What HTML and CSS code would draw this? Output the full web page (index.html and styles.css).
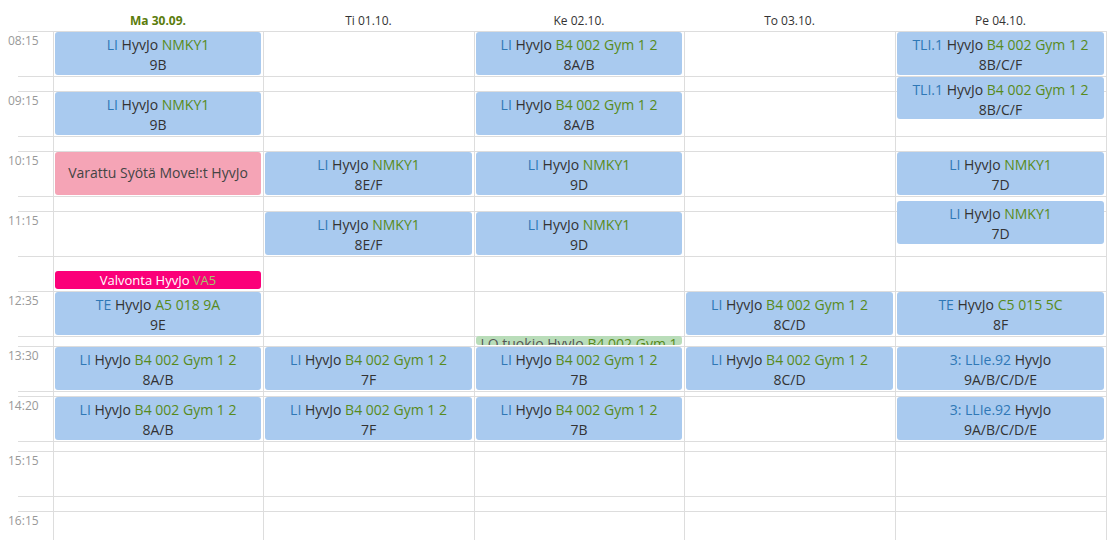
FILE: index.html
```html
<!DOCTYPE html>
<html lang="fi">
<head>
<meta charset="utf-8">
<title>Lukujärjestys</title>
<link rel="stylesheet" href="styles.css">
</head>
<body>
<div class="cal">
  <div class="head">
    <div class="head-day today">Ma 30.09.</div>
    <div class="head-day">Ti 01.10.</div>
    <div class="head-day">Ke 02.10.</div>
    <div class="head-day">To 03.10.</div>
    <div class="head-day">Pe 04.10.</div>
  </div>
  <div class="body">
    <div class="slots">
      <div class="slot lesson"><span class="time">08:15</span></div>
      <div class="slot b15"></div>
      <div class="slot lesson"><span class="time">09:15</span></div>
      <div class="slot b15"></div>
      <div class="slot lesson"><span class="time">10:15</span></div>
      <div class="slot b15"></div>
      <div class="slot lesson"><span class="time">11:15</span></div>
      <div class="slot b35"></div>
      <div class="slot lesson"><span class="time">12:35</span></div>
      <div class="slot b10"></div>
      <div class="slot lesson"><span class="time">13:30</span></div>
      <div class="slot b5"></div>
      <div class="slot lesson"><span class="time">14:20</span></div>
      <div class="slot b10"></div>
      <div class="slot lesson"><span class="time">15:15</span></div>
      <div class="slot b15"></div>
      <div class="slot lesson"><span class="time">16:15</span></div>
    </div>
    <div class="days">
      <div class="day">
        <div class="ev" style="top:1px;height:43px"><div><span class="c">LI</span> HyvJo <span class="r">NMKY1</span></div><div>9B</div></div>
        <div class="ev" style="top:61px;height:43px"><div><span class="c">LI</span> HyvJo <span class="r">NMKY1</span></div><div>9B</div></div>
        <div class="ev pink" style="top:121px;height:43px"><div>Varattu Syötä Move!:t HyvJo</div></div>
        <div class="ev duty" style="top:240px;height:18px">Valvonta HyvJo <span class="dr">VA5</span></div>
        <div class="ev" style="top:261px;height:43px"><div><span class="c">TE</span> HyvJo <span class="r">A5 018 9A</span></div><div>9E</div></div>
        <div class="ev" style="top:316px;height:43px"><div><span class="c">LI</span> HyvJo <span class="r">B4 002 Gym 1 2</span></div><div>8A/B</div></div>
        <div class="ev" style="top:366px;height:43px"><div><span class="c">LI</span> HyvJo <span class="r">B4 002 Gym 1 2</span></div><div>8A/B</div></div>
      </div>
      <div class="day">
        <div class="ev" style="top:121px;height:43px"><div><span class="c">LI</span> HyvJo <span class="r">NMKY1</span></div><div>8E/F</div></div>
        <div class="ev" style="top:181px;height:43px"><div><span class="c">LI</span> HyvJo <span class="r">NMKY1</span></div><div>8E/F</div></div>
        <div class="ev" style="top:316px;height:43px"><div><span class="c">LI</span> HyvJo <span class="r">B4 002 Gym 1 2</span></div><div>7F</div></div>
        <div class="ev" style="top:366px;height:43px"><div><span class="c">LI</span> HyvJo <span class="r">B4 002 Gym 1 2</span></div><div>7F</div></div>
      </div>
      <div class="day">
        <div class="ev" style="top:1px;height:43px"><div><span class="c">LI</span> HyvJo <span class="r">B4 002 Gym 1 2</span></div><div>8A/B</div></div>
        <div class="ev" style="top:61px;height:43px"><div><span class="c">LI</span> HyvJo <span class="r">B4 002 Gym 1 2</span></div><div>8A/B</div></div>
        <div class="ev" style="top:121px;height:43px"><div><span class="c">LI</span> HyvJo <span class="r">NMKY1</span></div><div>9D</div></div>
        <div class="ev" style="top:181px;height:43px"><div><span class="c">LI</span> HyvJo <span class="r">NMKY1</span></div><div>9D</div></div>
        <div class="ev green" style="top:305px;height:9px">LO tuokio HyvJo <span class="r">B4 002 Gym 1 2</span></div>
        <div class="ev" style="top:316px;height:43px"><div><span class="c">LI</span> HyvJo <span class="r">B4 002 Gym 1 2</span></div><div>7B</div></div>
        <div class="ev" style="top:366px;height:43px"><div><span class="c">LI</span> HyvJo <span class="r">B4 002 Gym 1 2</span></div><div>7B</div></div>
      </div>
      <div class="day">
        <div class="ev" style="top:261px;height:43px"><div><span class="c">LI</span> HyvJo <span class="r">B4 002 Gym 1 2</span></div><div>8C/D</div></div>
        <div class="ev" style="top:316px;height:43px"><div><span class="c">LI</span> HyvJo <span class="r">B4 002 Gym 1 2</span></div><div>8C/D</div></div>
      </div>
      <div class="day">
        <div class="ev" style="top:1px;height:43px"><div><span class="c">TLI.1</span> HyvJo <span class="r">B4 002 Gym 1 2</span></div><div>8B/C/F</div></div>
        <div class="ev" style="top:46px;height:42px"><div><span class="c">TLI.1</span> HyvJo <span class="r">B4 002 Gym 1 2</span></div><div>8B/C/F</div></div>
        <div class="ev" style="top:121px;height:43px"><div><span class="c">LI</span> HyvJo <span class="r">NMKY1</span></div><div>7D</div></div>
        <div class="ev" style="top:170px;height:43px"><div><span class="c">LI</span> HyvJo <span class="r">NMKY1</span></div><div>7D</div></div>
        <div class="ev" style="top:261px;height:43px"><div><span class="c">TE</span> HyvJo <span class="r">C5 015 5C</span></div><div>8F</div></div>
        <div class="ev" style="top:316px;height:43px"><div><span class="c">3: LLIe.92</span> HyvJo</div><div>9A/B/C/D/E</div></div>
        <div class="ev" style="top:366px;height:43px"><div><span class="c">3: LLIe.92</span> HyvJo</div><div>9A/B/C/D/E</div></div>
      </div>
    </div>
  </div>
</div>
</body>
</html>
```

FILE: styles.css
```css
html, body {
  margin: 0;
  padding: 0;
  background: #fff;
  overflow: hidden;
}
body {
  font-family: "Open Sans", "DejaVu Sans", sans-serif;
  color: #333;
  width: 1118px;
  height: 540px;
}
.cal {
  width: 1107px;
}
.head {
  height: 31px;
  padding-left: 53px;
  display: grid;
  grid-template-columns: 210px 211px 210px 211px 211px;
  width: 1054px;
}
.head-day {
  display: flex;
  align-items: flex-end;
  justify-content: center;
  font-size: 12px;
  line-height: 16px;
  padding-bottom: 2px;
  color: #333;
}
.head-day.today {
  font-weight: 700;
  color: #5b7c0c;
}
.body {
  position: relative;
}
.slots {
  display: flex;
  flex-direction: column;
}
.slot {
  box-sizing: border-box;
  margin-left: 18px;
  border-top: 1px solid #ddd;
}
.slot.lesson { height: 45px; }
.slot.b15 { height: 15px; }
.slot.b35 { height: 35px; }
.slot.b10 { height: 10px; }
.slot.b5 { height: 5px; }
.time {
  display: block;
  margin-left: -10px;
  padding-top: 1px;
  font-size: 12px;
  line-height: 16px;
  color: #999;
}
.days {
  position: absolute;
  top: 0;
  bottom: 0;
  left: 53px;
  width: 1054px;
  box-sizing: border-box;
  border-right: 1px solid #ddd;
  display: grid;
  grid-template-columns: 210px 211px 210px 211px 211px;
}
.day {
  position: relative;
  border-left: 1px solid #ddd;
}
.ev {
  position: absolute;
  left: 1px;
  right: 2px;
  box-sizing: border-box;
  border-radius: 3px;
  background: #a9caef;
  font-size: 14px;
  line-height: 20px;
  text-align: center;
  color: #333;
  overflow: hidden;
  display: flex;
  flex-direction: column;
  justify-content: center;
  padding: 3px 4px 0;
}
.ev .c { color: #2f78b6; }
.ev .r { color: #588a1c; }
.ev.pink {
  background: #f5a4b6;
  color: #444;
  padding: 0 4px 2px;
}
.ev.duty {
  background: #fb0079;
  color: #fff;
  font-size: 13px;
  line-height: 16px;
  padding: 1px 4px 0;
  display: block;
}
.ev.duty .dr { color: #a6c46c; }
.ev.green {
  background: #b9ddb9;
  color: #555;
  display: block;
  line-height: 16px;
  padding: 0 2px;
}
```
